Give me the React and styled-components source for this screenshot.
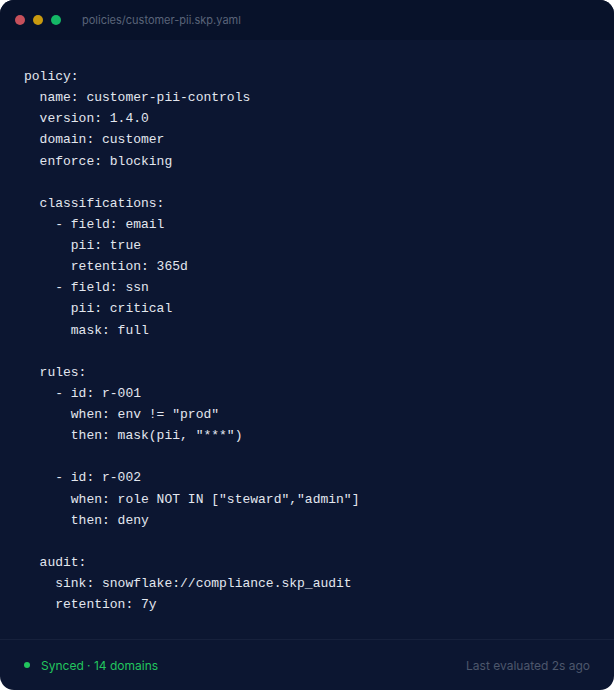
import React from "react";
import styled, { createGlobalStyle } from "styled-components";

const GlobalStyle = createGlobalStyle`
  html, body {
    margin: 0;
    padding: 0;
    background: #ffffff;
  }
`;

const Window = styled.div`
  width: 614px;
  height: 690px;
  display: flex;
  flex-direction: column;
  background: #0c1631;
  border-radius: 14px;
  overflow: hidden;
  font-family: Inter, "Noto Sans", sans-serif;
`;

const TitleBar = styled.div`
  height: 40px;
  flex: none;
  display: flex;
  align-items: center;
  padding: 0 15px;
  background: #08122a;
`;

const Dots = styled.div`
  display: flex;
  gap: 8px;
  margin-right: 21px;
`;

const Dot = styled.span`
  width: 10px;
  height: 10px;
  border-radius: 50%;
  background: ${(p) => p.color};
`;

const FileName = styled.span`
  font-size: 11px;
  color: #5a6479;
`;

const Code = styled.pre`
  flex: 1;
  min-height: 0;
  margin: 0;
  padding: 26px 24px 0;
  font-family: "Liberation Mono", "DejaVu Sans Mono", monospace;
  font-size: 13px;
  line-height: 21.12px;
  color: #e3e7ef;
  white-space: pre;
`;

const Footer = styled.div`
  height: 50px;
  flex: none;
  display: flex;
  align-items: center;
  justify-content: space-between;
  padding: 0 24px;
  border-top: 1px solid #17213c;
  font-size: 12px;
`;

const Status = styled.div`
  display: flex;
  align-items: center;
  gap: 11px;
  color: #22c55e;
`;

const StatusDot = styled.span`
  width: 6px;
  height: 6px;
  border-radius: 50%;
  background: #22c55e;
`;

const Muted = styled.span`
  color: #4d576c;
`;

const yaml = `policy:
  name: customer-pii-controls
  version: 1.4.0
  domain: customer
  enforce: blocking

  classifications:
    - field: email
      pii: true
      retention: 365d
    - field: ssn
      pii: critical
      mask: full

  rules:
    - id: r-001
      when: env != "prod"
      then: mask(pii, "***")

    - id: r-002
      when: role NOT IN ["steward","admin"]
      then: deny

  audit:
    sink: snowflake://compliance.skp_audit
    retention: 7y`;

export default function App() {
  return (
    <>
      <GlobalStyle />
      <Window>
        <TitleBar>
          <Dots>
            <Dot color="#c6505b" />
            <Dot color="#c99a0f" />
            <Dot color="#14b866" />
          </Dots>
          <FileName>policies/customer-pii.skp.yaml</FileName>
        </TitleBar>
        <Code>{yaml}</Code>
        <Footer>
          <Status>
            <StatusDot />
            Synced · 14 domains
          </Status>
          <Muted>Last evaluated 2s ago</Muted>
        </Footer>
      </Window>
    </>
  );
}
